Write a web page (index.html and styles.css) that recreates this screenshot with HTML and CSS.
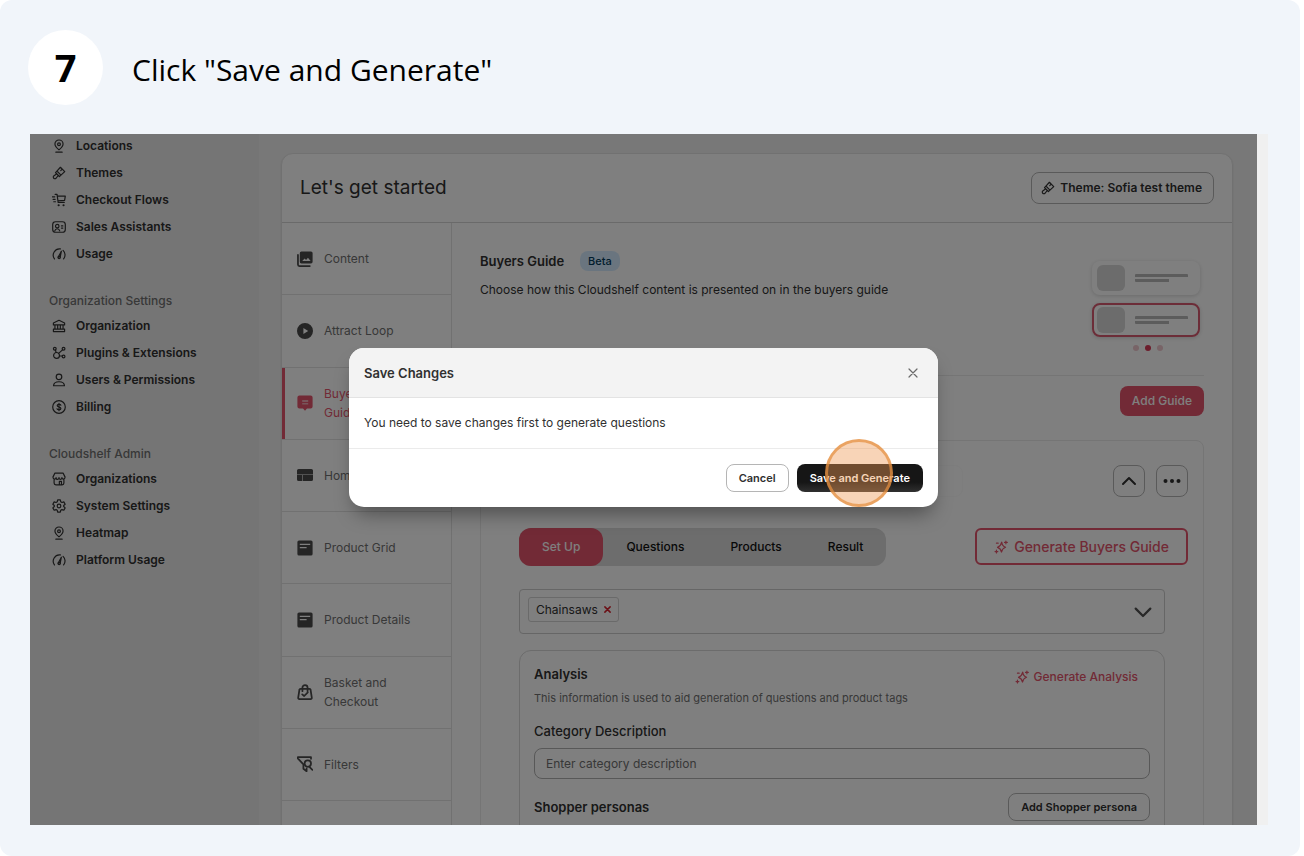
FILE: index.html
```html
<!DOCTYPE html>
<html lang="en">
  <head>
    <meta charset="UTF-8" />
    <meta name="viewport" content="width=device-width, initial-scale=1.0" />
    <title>Save and Generate</title>
    <link rel="stylesheet" href="styles.css">
  </head>
  <body>
    <!-- Shared icons -->
    <svg class="sprite" aria-hidden="true">
      <symbol id="pin" viewBox="0 0 20 20">
        <path d="M10 15.500c-2.800-2.200-5.800-5-5.800-8.300a5.800 5.800 0 0 1 11.600 0c0 3.300-3 6.100-5.800 8.300zM5.500 18.800h9" />
        <circle cx="10" cy="7.400" r="2" />
      </symbol>
      <symbol id="brush" viewBox="0 0 20 20">
        <path d="M12 1.800l6.200 6.200-5.400 5-5.800-5.800zM7 7.200l-2 2.200 5.600 5.600 2.200-2M6.800 11l-4.300 3.200a2.200 2.200 0 1 0 3.300 3.300l3.200-4.200M14.500 4.500l-2 2" />
      </symbol>
      <symbol id="cart" viewBox="0 0 20 20">
        <path d="M4.500 2h2.700l1.600 11.500h8.700M7.600 4.500h11.400l-1 6-9.600.6M.5 5.500h3.500M1.500 9h3M2.500 12.500h2.500" />
        <circle cx="9.500" cy="17.500" r=".7" /><circle cx="16.500" cy="17.500" r=".7" />
      </symbol>
      <symbol id="idcard" viewBox="0 0 20 20">
        <rect x="1" y="2.500" width="18" height="15" rx="4" />
        <circle cx="7.500" cy="8.800" r="2.500" />
        <path d="M4 15.500c.5-2.200 1.800-3 3.500-3s3 .8 3.500 3M13.500 8.500h2M13.500 11.500h2" />
      </symbol>
      <symbol id="gauge" viewBox="0 0 20 20">
        <path d="M3.500 17a9 9 0 0 1 8.500-14.200M15.800 4.800a9 9 0 0 1 .8 12.200M8.900 14.500l4.500-8.500-1.800 9" />
        <circle cx="10.200" cy="15" r="1.600" />
      </symbol>
      <symbol id="bank" viewBox="0 0 20 20">
        <path d="M10 1.800l8 4v2.700h-16v-2.700zM4.200 8.500v6M8.100 8.500v6M11.900 8.500v6M15.800 8.500v6M2 14.500h16v3.500h-16z" />
      </symbol>
      <symbol id="plugins" viewBox="0 0 20 20">
        <circle cx="6.500" cy="13.500" r="4.200" /><circle cx="4" cy="4" r="2" />
        <circle cx="16.500" cy="4" r="2" /><circle cx="16.500" cy="15" r="2" />
        <path d="M5 6l.8 3.300M15 5.500l-5.500 5M10.700 14.300h3.800" />
      </symbol>
      <symbol id="person" viewBox="0 0 20 20">
        <circle cx="10" cy="5.500" r="4" />
        <path d="M2.200 18.200c.2-3.700 3-5.700 7.800-5.700s7.600 2 7.800 5.700z" />
      </symbol>
      <symbol id="dollar" viewBox="0 0 20 20">
        <circle cx="10" cy="10" r="9" />
        <path d="M12.700 7.500c-.4-1-1.400-1.400-2.700-1.400-1.500 0-2.600.6-2.600 1.800 0 2.900 5.300 1.300 5.300 4.200 0 1.300-1.200 1.900-2.700 1.900-1.400 0-2.500-.5-2.900-1.500M10 4.700v10.600" />
      </symbol>
      <symbol id="store" viewBox="0 0 20 20">
        <path d="M4.200 1.500h11.600l2.900 5.800c0 3.700-4.500 3.700-4.500.7 0 3.500-4.200 3.500-4.200 0 0 3.500-4.200 3.500-4.200 0 0 3-4.500 3-4.500-.7zM3 10.500v5.300a2.500 2.500 0 0 0 2.500 2.500h9a2.500 2.500 0 0 0 2.500-2.500v-5.300M10.500 18v-4.500h3v4.500" />
      </symbol>
      <symbol id="gear" viewBox="0 0 20 20">
        <path d="M8.100 1.200h3.800l.6 2.800 1.700 1 2.700-.9 1.900 3.300-2.100 1.800v1.600l2.100 1.900-1.900 3.300-2.700-.9-1.700 1-.6 2.700h-3.800l-.6-2.700-1.700-1-2.700.9-1.900-3.300 2.100-1.900v-1.600l-2.100-1.800 1.900-3.300 2.700.9 1.700-1z" />
        <circle cx="10" cy="10" r="2.600" />
      </symbol>
      <symbol id="sparkle" viewBox="0 0 20 20">
        <path d="M11 3c.5 4.200 2 6 5.500 7.300-3.500 1.200-5 3-5.800 6.900-.8-3.700-2.200-5.500-5.700-6.600 3.600-1.500 5.200-3.400 6-7.600z" />
        <path d="M17 1.500v4M15 3.500h4M3.500 14.500v4M1.500 16.500h4M3.500 4.500h2.500" />
      </symbol>
      <symbol id="pictures" viewBox="0 0 20 20">
        <path class="solid" d="M5.500.5h12a2 2 0 0 1 2 2v11a2 2 0 0 1-2 2h-12a2 2 0 0 1-2-2v-11a2 2 0 0 1 2-2zM6.500 12.500h10.500l-3.300-4-2.400 2.700-1.700-1.700z" />
        <path class="bold" d="M1.200 5v12a1.800 1.800 0 0 0 1.800 1.800h13" />
      </symbol>
      <symbol id="play" viewBox="0 0 20 20">
        <path class="solid" d="M10 0a10 10 0 1 1 0 20 10 10 0 0 1 0-20zM8 6.200v7.600l6-3.800z" />
      </symbol>
      <symbol id="chat" viewBox="0 0 20 20">
        <path class="solid" d="M3 .5h14a2.500 2.500 0 0 1 2.500 2.500v11.500a2.500 2.500 0 0 1-2.500 2.500h-4.500l-2.500 2.800-2.500-2.800h-4.500a2.500 2.500 0 0 1-2.500-2.500v-11.500a2.500 2.500 0 0 1 2.500-2.500zM6.500 6.800v1.200h7.500v-1.200zM6.500 10.500v1.200h7.500v-1.200z" />
      </symbol>
      <symbol id="layout" viewBox="0 0 20 20">
        <path class="solid" d="M2 2.500h16a2 2 0 0 1 2 2v4.800h-20v-4.800a2 2 0 0 1 2-2zM0 10h6.500v7.500h-4.500a2 2 0 0 1-2-2zM7.200 10h12.800v5.500a2 2 0 0 1-2 2h-10.800z" />
      </symbol>
      <symbol id="page" viewBox="0 0 20 20">
        <path class="solid" d="M2.500.5h15a2 2 0 0 1 2 2v15a2 2 0 0 1-2 2h-15a2 2 0 0 1-2-2v-15a2 2 0 0 1 2-2zM3.500 4.800v1.400h13v-1.400zM3.500 8.800v1.400h8.500v-1.400z" />
      </symbol>
      <symbol id="basket" viewBox="0 0 20 20">
        <path class="bold" d="M4.500 6h11a1.500 1.500 0 0 1 1.500 1.500l1.500 9.500a1.500 1.500 0 0 1-1.500 1.800h-14a1.500 1.500 0 0 1-1.500-1.800l1.500-9.500a1.500 1.500 0 0 1 1.500-1.500zM6.800 9v-4.500a3.200 3.200 0 0 1 6.400 0v4.500M6.500 13l2.500 2 4.500-4.500" />
      </symbol>
      <symbol id="filter" viewBox="0 0 20 20">
        <path class="bold" d="M8 10.500l-7-7.500v-1.500h16.500v2M8 10.500v5.500l4 3v-3.500M15.500 13.500l3.800 3.800" />
        <circle class="bold" cx="13.500" cy="9.500" r="4" />
      </symbol>
    </svg>

    <div class="step">
      <header class="step-header">
        <div class="step-number">7</div>
        <h1 class="step-title">Click "Save and Generate"</h1>
      </header>

      <div class="shot">
        <div class="app">
          <nav class="sidebar">
            <ul class="side-list">
              <li><a class="side-link" href="#"><svg class="icon"><use href="#pin" /></svg>Locations</a></li>
              <li><a class="side-link" href="#"><svg class="icon"><use href="#brush" /></svg>Themes</a></li>
              <li><a class="side-link" href="#"><svg class="icon"><use href="#cart" /></svg>Checkout Flows</a></li>
              <li><a class="side-link" href="#"><svg class="icon"><use href="#idcard" /></svg>Sales Assistants</a></li>
              <li><a class="side-link" href="#"><svg class="icon"><use href="#gauge" /></svg>Usage</a></li>
            </ul>
            <h2 class="side-heading">Organization Settings</h2>
            <ul class="side-list">
              <li><a class="side-link" href="#"><svg class="icon"><use href="#bank" /></svg>Organization</a></li>
              <li><a class="side-link" href="#"><svg class="icon"><use href="#plugins" /></svg>Plugins &amp; Extensions</a></li>
              <li><a class="side-link" href="#"><svg class="icon"><use href="#person" /></svg>Users &amp; Permissions</a></li>
              <li><a class="side-link" href="#"><svg class="icon"><use href="#dollar" /></svg>Billing</a></li>
            </ul>
            <h2 class="side-heading">Cloudshelf Admin</h2>
            <ul class="side-list">
              <li><a class="side-link" href="#"><svg class="icon"><use href="#store" /></svg>Organizations</a></li>
              <li><a class="side-link" href="#"><svg class="icon"><use href="#gear" /></svg>System Settings</a></li>
              <li><a class="side-link" href="#"><svg class="icon"><use href="#pin" /></svg>Heatmap</a></li>
              <li><a class="side-link" href="#"><svg class="icon"><use href="#gauge" /></svg>Platform Usage</a></li>
            </ul>
          </nav>

          <main class="main">
            <section class="card">
              <div class="card-header">
                <h2 class="card-title">Let's get started</h2>
                <button class="btn theme-btn" type="button"><svg class="icon"><use href="#brush" /></svg>Theme: Sofia test theme</button>
              </div>

              <div class="card-body">
                <nav class="tabs">
                  <a class="tab" href="#"><svg class="icon"><use href="#pictures" /></svg><span>Content</span></a>
                  <a class="tab" href="#"><svg class="icon"><use href="#play" /></svg><span>Attract Loop</span></a>
                  <a class="tab active" href="#"><svg class="icon"><use href="#chat" /></svg><span>Buyers<br>Guide</span></a>
                  <a class="tab" href="#"><svg class="icon"><use href="#layout" /></svg><span>Home</span></a>
                  <a class="tab" href="#"><svg class="icon"><use href="#page" /></svg><span>Product Grid</span></a>
                  <a class="tab" href="#"><svg class="icon"><use href="#page" /></svg><span>Product Details</span></a>
                  <a class="tab" href="#"><svg class="icon"><use href="#basket" /></svg><span>Basket and Checkout</span></a>
                  <a class="tab" href="#"><svg class="icon"><use href="#filter" /></svg><span>Filters</span></a>
                </nav>

                <div class="content">
                  <div class="intro">
                    <div>
                      <h3 class="intro-title">Buyers Guide <span class="badge">Beta</span></h3>
                      <p class="intro-text">Choose how this Cloudshelf content is presented on in the buyers guide</p>
                    </div>
                    <div class="preview">
                      <div class="preview-row"><i class="thumb"></i><i class="lines"></i></div>
                      <div class="preview-row selected"><i class="thumb"></i><i class="lines"></i></div>
                      <div class="dots"><i></i><i class="on"></i><i></i></div>
                    </div>
                  </div>

                  <div class="add-row">
                    <button class="btn primary" type="button">Add Guide</button>
                  </div>

                  <div class="guide">
                    <div class="guide-header">
                      <input class="guide-name" type="text" aria-label="Guide name">
                      <button class="btn square" type="button" aria-label="Collapse">
                        <svg class="glyph" viewBox="0 0 16 16"><path d="M2 11l6-6 6 6" /></svg>
                      </button>
                      <button class="btn square" type="button" aria-label="More">
                        <svg class="glyph more" viewBox="0 0 18 16"><circle cx="2.500" cy="8" r="2" /><circle cx="9" cy="8" r="2" /><circle cx="15.500" cy="8" r="2" /></svg>
                      </button>
                    </div>

                    <div class="guide-actions">
                      <div class="segments">
                        <button class="segment on" type="button">Set Up</button>
                        <button class="segment" type="button">Questions</button>
                        <button class="segment" type="button">Products</button>
                        <button class="segment" type="button">Result</button>
                      </div>
                      <button class="generate-btn" type="button"><svg class="icon"><use href="#sparkle" /></svg>Generate Buyers Guide</button>
                    </div>

                    <div class="picker">
                      <span class="chip">Chainsaws <button class="chip-remove" type="button" aria-label="Remove Chainsaws"><svg viewBox="0 0 8 8"><path d="M1 1l6 6M7 1l-6 6" /></svg></button></span>
                      <svg class="glyph chevron" viewBox="0 0 16 16"><path d="M1.500 5l6.500 6.500 6.500-6.500" /></svg>
                    </div>

                    <div class="analysis">
                      <div class="analysis-head">
                        <div>
                          <h4 class="analysis-title">Analysis</h4>
                          <p class="analysis-text">This information is used to aid generation of questions and product tags</p>
                        </div>
                        <button class="link-btn" type="button"><svg class="icon"><use href="#sparkle" /></svg>Generate Analysis</button>
                      </div>
                      <label class="label" for="category">Category Description</label>
                      <input class="field" id="category" type="text" placeholder="Enter category description">
                      <div class="personas">
                        <h4 class="personas-title">Shopper personas</h4>
                        <button class="btn small" type="button">Add Shopper persona</button>
                      </div>
                    </div>
                  </div>
                </div>
              </div>
            </section>
          </main>

          <div class="overlay">
            <div class="modal" role="dialog" aria-labelledby="modal-title">
              <div class="modal-header">
                <h2 class="modal-title" id="modal-title">Save Changes</h2>
                <button class="close" type="button" aria-label="Close"><svg viewBox="0 0 10 10"><path d="M1 1l8 8M9 1l-8 8" /></svg></button>
              </div>
              <p class="modal-text">You need to save changes first to generate questions</p>
              <div class="modal-footer">
                <button class="btn small" type="button">Cancel</button>
                <div class="target">
                  <button class="btn small dark" type="button">Save and Generate</button>
                  <span class="click-ring"></span>
                </div>
              </div>
            </div>
          </div>
        </div>
        <div class="edge"></div>
      </div>
    </div>
  </body>
</html>
```

FILE: styles.css
```css
* {
    box-sizing: border-box;
}

body {
    margin: 0;
    background-color: #ffffff;
    font-family: Inter, "Liberation Sans", sans-serif;
    font-size: 13px;
    line-height: 18px;
    color: #303030;
}

h1, h2, h3, h4, p, ul {
    margin: 0;
    padding: 0;
}

ul {
    list-style: none;
}

a {
    color: inherit;
    text-decoration: none;
}

button, input {
    font: inherit;
    color: inherit;
}

.sprite {
    display: none;
}

symbol, .glyph, .close svg, .chip-remove svg {
    fill: none;
    stroke: currentColor;
    stroke-width: 1.7;
    stroke-linecap: round;
    stroke-linejoin: round;
}

.solid {
    fill: currentColor;
    fill-rule: evenodd;
    stroke: none;
}

.bold {
    stroke-width: 2.2;
}

.icon {
    width: 14px;
    height: 14px;
    flex: none;
}

/* Step */
.step {
    display: flex;
    flex-direction: column;
    height: 100vh;
    margin-right: 4px;
    padding: 30px 32px 31px 28px;
    background-color: #f1f5fa;
    border-radius: 12px;
    font-family: "Open Sans", sans-serif;
    color: #000000;
}

.step-header {
    display: flex;
    align-items: center;
    gap: 29px;
    margin-bottom: 29px;
}

.step-number {
    width: 75px;
    height: 75px;
    border-radius: 50%;
    background-color: #ffffff;
    font-size: 38px;
    font-weight: 700;
    line-height: 75px;
    text-align: center;
}

.step-title {
    font-size: 30px;
    font-weight: 400;
    line-height: 40px;
    padding-top: 4px;
}

.shot {
    display: flex;
    flex: 1;
    min-height: 0;
    margin-left: 2px;
}

.edge {
    width: 11px;
    background-color: #f0f0f0;
}

/* App */
.app {
    position: relative;
    display: flex;
    flex: 1;
    overflow: hidden;
    background-color: #f1f1f1;
    font-family: Inter, "Liberation Sans", sans-serif;
    color: #303030;
}

.sidebar {
    width: 229px;
    flex: none;
    margin-top: -2px;
    background-color: #ebebeb;
}

.side-link {
    display: flex;
    align-items: center;
    gap: 10px;
    height: 27px;
    padding-left: 22px;
    font-weight: 600;
    font-size: 12px;
}

.side-heading {
    height: 22px;
    margin-top: 23px;
    padding-left: 19px;
    font-size: 12px;
    font-weight: 500;
    line-height: 22px;
    color: #707070;
}

.main {
    flex: 1;
    padding: 19px 24px 0 22px;
}

.card {
    background-color: #ffffff;
    border: 1px solid #e3e3e3;
    border-radius: 12px 12px 0 0;
    box-shadow: 0 1px 2px rgba(0, 0, 0, 0.1);
}

.card-header {
    display: flex;
    align-items: center;
    justify-content: space-between;
    height: 69px;
    padding: 0 18px;
    border-bottom: 1px solid #d4d4d4;
}

.card-title {
    font-size: 19px;
    font-weight: 400;
    line-height: 24px;
}

.btn {
    height: 28px;
    padding: 0 11px;
    background-color: #ffffff;
    border: 1px solid #b5b5b5;
    border-radius: 8px;
    font-size: 12px;
    font-weight: 600;
    white-space: nowrap;
}

.btn.small {
    padding: 0 12px;
    font-size: 11px;
}

.theme-btn {
    display: flex;
    align-items: center;
    gap: 5px;
    height: 32px;
    padding: 0 11px 0 9px;
}

.card-body {
    display: flex;
}

/* Left tabs */
.tabs {
    display: grid;
    grid-template-rows: repeat(8, 1fr);
    width: 169px;
    height: 578px;
    flex: none;
}

.tab {
    display: flex;
    align-items: center;
    gap: 11px;
    padding: 0 24px 0 15px;
    border-bottom: 1px solid #e3e3e3;
    color: #707070;
    font-size: 12px;
    line-height: 19px;
}

.tab .icon {
    width: 16px;
    height: 16px;
    color: #4a4a4a;
}

.tab.active, .tab.active .icon {
    color: #e4556c;
}

.tab.active {
    box-shadow: inset 3px 0 0 #e4556c;
}

/* Buyers guide */
.content {
    flex: 1;
    padding: 28px;
    border-left: 1px solid #e3e3e3;
}

.intro {
    display: flex;
    justify-content: space-between;
    height: 125px;
    border-bottom: 1px solid #ebebeb;
}

.intro-title {
    display: flex;
    align-items: center;
    gap: 16px;
    font-size: 13px;
    font-weight: 600;
    line-height: 20px;
}

.badge {
    padding: 0 8px;
    border-radius: 8px;
    background-color: #d5ebff;
    color: #003a5a;
    font-size: 11px;
    font-weight: 500;
}

.intro-text {
    margin-top: 10px;
    font-size: 12px;
}

.preview {
    display: flex;
    flex-direction: column;
    gap: 8px;
    padding: 10px 4px 0 0;
}

.preview-row {
    display: flex;
    align-items: center;
    gap: 10px;
    width: 108px;
    height: 34px;
    padding-left: 5px;
    border-radius: 8px;
    box-shadow: 0 1px 4px rgba(0, 0, 0, 0.16);
}

.preview-row.selected {
    border: 2px solid #d85a70;
    padding-left: 3px;
}

.thumb {
    width: 28px;
    height: 26px;
    border-radius: 6px;
    background-color: #d8d8d8;
}

.lines {
    width: 53px;
    height: 8px;
    border-top: 3px solid #b8b8b8;
    border-radius: 1px;
    background: linear-gradient(#b8b8b8, #b8b8b8) left bottom / 34px 3px no-repeat;
}

.dots {
    display: flex;
    justify-content: center;
    gap: 6px;
    margin-left: 4px;
}

.dots i {
    width: 6px;
    height: 6px;
    border-radius: 50%;
    background-color: #f0c8cf;
}

.dots .on {
    background-color: #d93a58;
}

.add-row {
    display: flex;
    justify-content: flex-end;
    padding: 10px 0 24px;
}

.btn.primary {
    height: 30px;
    padding: 0 12px;
    border: 0;
    background-color: #e4556c;
    color: #ffffff;
    font-weight: 500;
}

.guide {
    padding: 24px 15px 0 38px;
    border: 1px solid #eaeaea;
    border-radius: 8px;
}

.guide-header {
    display: flex;
    gap: 11px;
}

.guide-name {
    width: 444px;
    margin-right: auto;
    border: 1px solid #fafafa;
    border-radius: 8px;
    background-color: #ffffff;
}

.square {
    display: flex;
    align-items: center;
    justify-content: center;
    width: 32px;
    height: 32px;
    padding: 0;
}

.glyph {
    width: 16px;
    height: 16px;
    stroke-width: 2;
}

.more {
    width: 18px;
    fill: currentColor;
    stroke: none;
}

.guide-actions {
    display: flex;
    justify-content: space-between;
    margin: 31px 0 23px;
}

.segments {
    display: flex;
    height: 38px;
    border-radius: 12px;
    background-color: #dadada;
}

.segment {
    padding: 0 23px;
    border: 0;
    border-radius: 12px;
    background-color: transparent;
    font-size: 12px;
    font-weight: 500;
    color: #101010;
}

.segment.on {
    background-color: #e4556c;
    color: #ffffff;
}

.generate-btn {
    display: flex;
    align-items: center;
    gap: 6px;
    height: 37px;
    padding: 0 17px;
    border: 2px solid #e4556c;
    border-radius: 6px;
    background-color: #ffffff;
    color: #e4556c;
    font-size: 14px;
    font-weight: 500;
}

.picker {
    display: flex;
    align-items: flex-start;
    justify-content: space-between;
    height: 45px;
    margin-right: 23px;
    padding: 7px 12px 0 8px;
    border: 1px solid #cccccc;
    border-radius: 4px;
}

.chip {
    display: flex;
    align-items: center;
    gap: 6px;
    height: 25px;
    padding: 0 7px;
    border: 1px solid #d4d4d4;
    border-radius: 3px;
    font-size: 12px;
}

.chip-remove {
    display: flex;
    padding: 0;
    border: 0;
    background: none;
    color: #d8202c;
}

.chip-remove svg {
    width: 7px;
    height: 7px;
}

.chevron {
    margin-top: 6px;
    width: 18px;
    height: 18px;
    color: #505050;
}

.analysis {
    margin: 16px 23px 0 0;
    padding: 14px 14px 24px;
    border: 1px solid #d8d8d8;
    border-radius: 12px;
}

.analysis-head {
    display: flex;
    align-items: flex-start;
    justify-content: space-between;
    padding-right: 12px;
}

.analysis-title {
    font-size: 13px;
    font-weight: 600;
}

.analysis-text {
    margin-top: 6px;
    font-size: 11px;
    color: #707070;
}

.link-btn {
    display: flex;
    align-items: center;
    gap: 5px;
    padding: 0;
    border: 0;
    background: none;
    color: #e4556c;
    font-size: 12px;
    font-weight: 500;
    line-height: 24px;
}

.label {
    display: block;
    margin: 15px 0 8px;
    font-weight: 500;
}

.field {
    display: block;
    width: 100%;
    height: 31px;
    padding: 0 11px;
    border: 1px solid #b0b0b0;
    border-radius: 8px;
    background-color: #ffffff;
    font-size: 12px;
}

.field::placeholder {
    color: #707070;
}

.personas {
    display: flex;
    align-items: center;
    justify-content: space-between;
    margin-top: 14px;
}

.personas-title {
    font-size: 13px;
    font-weight: 600;
}

/* Modal */
.overlay {
    position: absolute;
    inset: 0;
    display: flex;
    align-items: flex-start;
    justify-content: center;
    padding-top: 214px;
    background-color: rgba(0, 0, 0, 0.5);
}

.modal {
    width: 48%;
    border-radius: 15px;
    background-color: #ffffff;
    box-shadow: 0 12px 20px -6px rgba(0, 0, 0, 0.4);
}

.modal-header {
    display: flex;
    align-items: center;
    justify-content: space-between;
    height: 50px;
    padding: 0 20px 0 15px;
    border-bottom: 1px solid #e3e3e3;
    border-radius: 15px 15px 0 0;
    background-color: #f3f3f3;
}

.modal-title {
    font-size: 13px;
    font-weight: 600;
}

.close {
    display: flex;
    padding: 0;
    border: 0;
    background: none;
    color: #6a6a6a;
}

.close svg {
    width: 10px;
    height: 10px;
    stroke-width: 1.2;
}

.modal-text {
    padding: 16px 15px;
    border-bottom: 1px solid #ebebeb;
    font-size: 12px;
}

.modal-footer {
    display: flex;
    justify-content: flex-end;
    gap: 8px;
    padding: 15px;
}

.target {
    position: relative;
}

.btn.dark {
    padding: 0 13px;
    border: 0;
    background: linear-gradient(#161616, #161616 65%, #303030);
    color: #ffffff;
}

.click-ring {
    position: absolute;
    top: -25px;
    left: 28px;
    width: 68px;
    height: 68px;
    border: 3px solid rgba(228, 142, 62, 0.7);
    border-radius: 50%;
    background-color: rgba(238, 152, 84, 0.42);
}
```
